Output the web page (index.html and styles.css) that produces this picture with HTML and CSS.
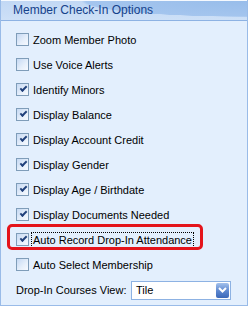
FILE: index.html
```html
<!DOCTYPE html>
<html lang="en">
<head>
  <meta charset="UTF-8">
  <title>Member Check-In Options</title>
  <link rel="stylesheet" href="styles.css">
</head>
<body>
  <div class="panel">
    <div class="panel-header">Member Check-In Options</div>

    <div class="panel-body">
      <label class="option"><span class="box"></span><span class="text">Zoom Member Photo</span></label>
      <label class="option"><span class="box"></span><span class="text">Use Voice Alerts</span></label>
      <label class="option"><span class="box checked"></span><span class="text">Identify Minors</span></label>
      <label class="option"><span class="box checked"></span><span class="text">Display Balance</span></label>
      <label class="option"><span class="box checked"></span><span class="text">Display Account Credit</span></label>
      <label class="option"><span class="box checked"></span><span class="text">Display Gender</span></label>
      <label class="option"><span class="box checked"></span><span class="text">Display Age / Birthdate</span></label>
      <label class="option"><span class="box checked"></span><span class="text">Display Documents Needed</span></label>
      <label class="option highlight"><span class="box checked"></span><span class="text focused">Auto Record Drop-In Attendance</span></label>
      <label class="option"><span class="box"></span><span class="text">Auto Select Membership</span></label>

      <div class="field">
        <span class="field-label">Drop-In Courses View:</span>
        <div class="select">
          <span class="select-value">Tile</span>
          <span class="select-btn">
            <svg width="9" height="6" viewBox="0 0 9 6"><path d="M1 1 L4.5 4.5 L8 1" fill="none" stroke="#fff" stroke-width="2"/></svg>
          </span>
        </div>
      </div>
    </div>
  </div>
</body>
</html>
```

FILE: styles.css
```css
body {
  margin: 0;
  background: #fff;
  font-family: 'Liberation Sans', Arial, sans-serif;
  font-size: 11px;
  color: #000;
}

.panel {
  width: 248px;
  height: 306px;
  border: 1px solid #99bbe8;
  border-top: none;
  background: #e3effd;
  box-sizing: border-box;
  display: flex;
  flex-direction: column;
}

.panel-header {
  height: 21px;
  box-sizing: border-box;
  border-top: 1px solid #f5f9fe;
  border-bottom: 1px solid #8db2e3;
  padding-left: 12px;
  line-height: 19px;
  color: #15428b;
  font-size: 12px;
  background:
    radial-gradient(ellipse 230px 22px at 100% 0%, #98bdea 0%, #a4c5ee 70%, rgba(164,197,238,0) 72%),
    linear-gradient(#c2d8f4, #cde0f7);
}

.panel-body {
  padding: 6px 0 0 15px;
  display: flex;
  flex-direction: column;
}

.option {
  position: relative;
  height: 25px;
  display: flex;
  align-items: center;
  gap: 2px;
}

.box {
  width: 11px;
  height: 11px;
  border: 1px solid #7f9db9;
  background: linear-gradient(135deg, #c6d9f3 0%, #e7f0fb 60%, #f6f9fe 100%);
  position: relative;
}

.box.checked::after {
  content: '';
  position: absolute;
  left: 3px;
  top: 2px;
  width: 5px;
  height: 2px;
  border-left: 2px solid #21417b;
  border-bottom: 2px solid #21417b;
  transform: rotate(-45deg);
}

.text {
  padding: 1px 1px;
  border: 1px dotted transparent;
  white-space: nowrap;
}

.text.focused {
  border-color: #000;
}

.highlight::before {
  content: '';
  position: absolute;
  left: -9px;
  top: -3px;
  width: 190px;
  height: 20px;
  border: 3px solid #e4141b;
  border-radius: 5px;
}

.field {
  height: 24px;
  display: flex;
  align-items: center;
  margin-top: 1px;
}

.field-label {
  width: 115px;
  white-space: nowrap;
}

.select {
  width: 93px;
  height: 17px;
  border: 1px solid #8db2e3;
  background: #fff;
  display: flex;
  align-items: center;
  padding: 0 1px 0 4px;
}

.select-value {
  flex: 1;
}

.select-btn {
  width: 13px;
  height: 15px;
  border-radius: 2px;
  background: linear-gradient(#a3c1ec, #5b86cf 55%, #3b68b8);
  display: flex;
  align-items: center;
  justify-content: center;
}
```
